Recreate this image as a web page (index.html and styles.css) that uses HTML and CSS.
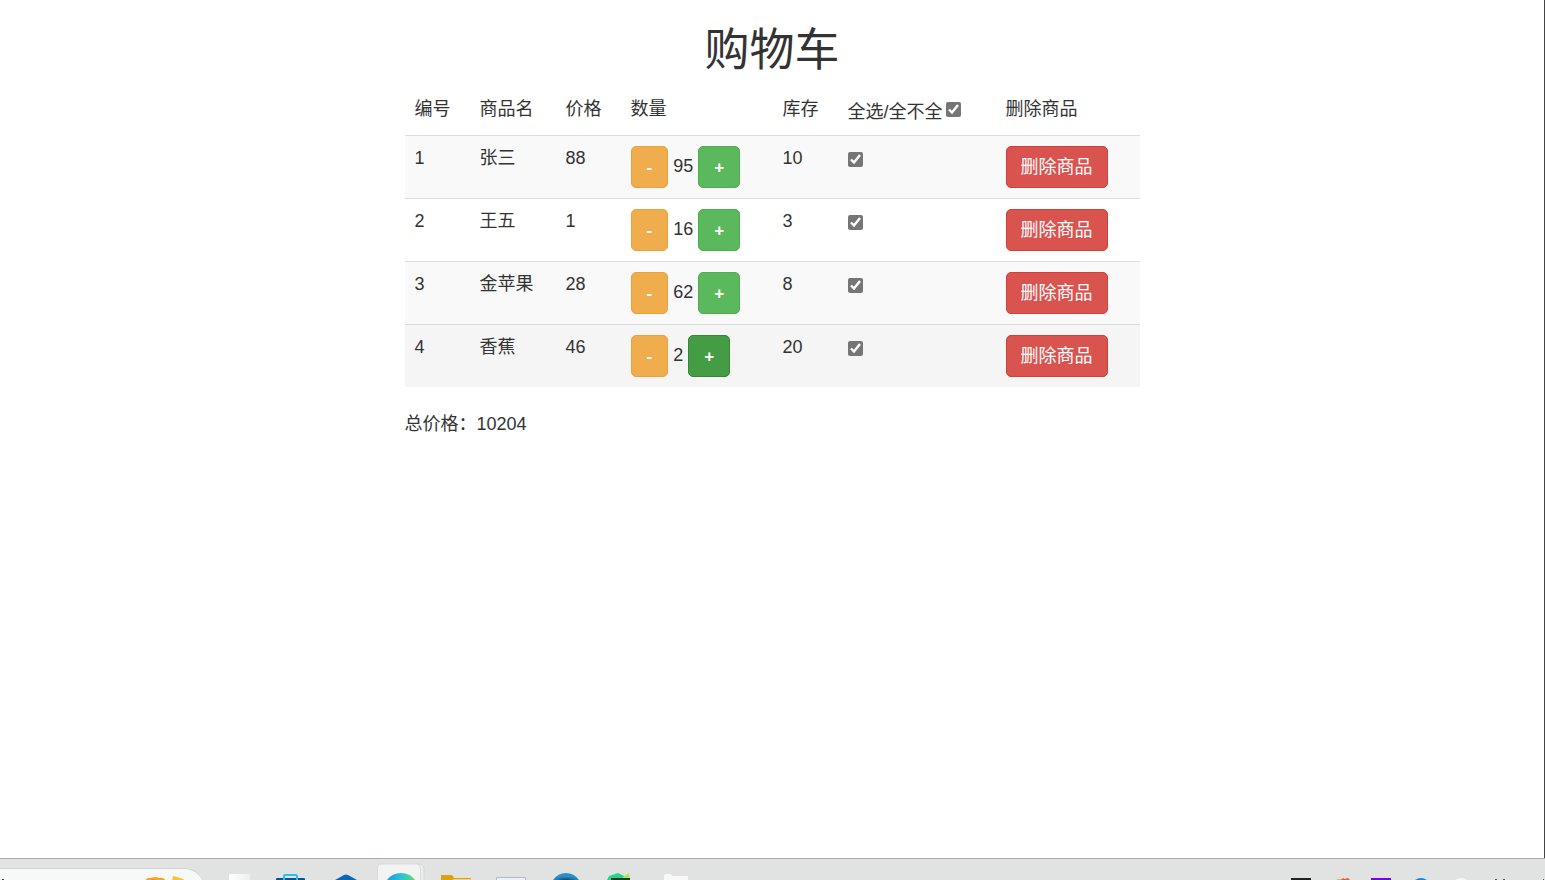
FILE: index.html
```html
<!DOCTYPE html>
<html lang="zh-CN">
<head>
<meta charset="utf-8">
<meta name="viewport" content="width=device-width, initial-scale=1">
<title>购物车</title>
<link rel="stylesheet" href="styles.css">
</head>
<body>
<main class="page">
  <div class="cart">
    <h1 class="cart-title">购物车</h1>
    <table class="cart-table">
      <colgroup>
        <col class="col-id"><col class="col-name"><col class="col-price"><col class="col-qty"><col class="col-stock"><col class="col-check"><col class="col-delete">
      </colgroup>
      <thead>
        <tr>
          <th scope="col">编号</th>
          <th scope="col">商品名</th>
          <th scope="col">价格</th>
          <th scope="col">数量</th>
          <th scope="col">库存</th>
          <th scope="col"><label class="check-all">全选/全不全 <input class="check" type="checkbox" checked></label></th>
          <th scope="col">删除商品</th>
        </tr>
      </thead>
      <tbody>
        <tr>
          <td>1</td><td>张三</td><td>88</td>
          <td><div class="qty"><button class="btn btn-warning" type="button">-</button><span>95</span><button class="btn btn-success" type="button">+</button></div></td>
          <td>10</td>
          <td><input class="check" type="checkbox" aria-label="张三" checked></td>
          <td><button class="btn btn-danger" type="button">删除商品</button></td>
        </tr>
        <tr>
          <td>2</td><td>王五</td><td>1</td>
          <td><div class="qty"><button class="btn btn-warning" type="button">-</button><span>16</span><button class="btn btn-success" type="button">+</button></div></td>
          <td>3</td>
          <td><input class="check" type="checkbox" aria-label="王五" checked></td>
          <td><button class="btn btn-danger" type="button">删除商品</button></td>
        </tr>
        <tr>
          <td>3</td><td>金苹果</td><td>28</td>
          <td><div class="qty"><button class="btn btn-warning" type="button">-</button><span>62</span><button class="btn btn-success" type="button">+</button></div></td>
          <td>8</td>
          <td><input class="check" type="checkbox" aria-label="金苹果" checked></td>
          <td><button class="btn btn-danger" type="button">删除商品</button></td>
        </tr>
        <tr class="is-hovered">
          <td>4</td><td>香蕉</td><td>46</td>
          <td><div class="qty"><button class="btn btn-warning" type="button">-</button><span>2</span><button class="btn btn-success is-active" type="button">+</button></div></td>
          <td>20</td>
          <td><input class="check" type="checkbox" aria-label="香蕉" checked></td>
          <td><button class="btn btn-danger" type="button">删除商品</button></td>
        </tr>
      </tbody>
    </table>
    <p class="total">总价格：10204</p>
  </div>
</main>
<footer class="taskbar">
  <div class="search">
    <svg width="204" height="12" viewBox="0 0 204 12" aria-hidden="true">
      <path d="M2 10h2v2H2z" fill="#444"/>
      <path d="M145 12q2-4 6-3 5-2 8 0 5-1 7 3z" fill="#f5a623"/>
      <path d="M150 12l3-2 3 2z" fill="#e98a10"/>
      <path d="M172 12l1-5 4 1 6 2 2 2z" fill="#fbc235"/>
    </svg>
  </div>
  <div class="apps">
    <button class="app" type="button" aria-label="任务视图"><svg width="55" height="21" viewBox="0 0 55 21"><defs><linearGradient id="pane"><stop stop-color="#fff"/><stop offset="1" stop-color="#eee"/></linearGradient></defs><path d="M17 16q0-1 1-1h19q1 0 1 1v5H17z" fill="url(#pane)"/></svg></button>
    <button class="app" type="button" aria-label="应用商店"><svg width="55" height="21" viewBox="0 0 55 21"><path d="M9 21v-1q0-1 1-1h27q1 0 1 1v1z" fill="#0a5494"/><path d="M17 21v-4q0-1 1-1h11q1 0 1 1v4" fill="none" stroke="#28c1ef" stroke-width="2"/></svg></button>
    <button class="app" type="button" aria-label="开发工具"><svg width="55" height="21" viewBox="0 0 55 21"><path d="M13 21l9-5q2-1 4 0l9 5z" fill="#0b66b8"/></svg></button>
    <button class="app" type="button" aria-label="浏览器"><svg width="55" height="21" viewBox="0 0 55 21"><defs><linearGradient id="wave"><stop stop-color="#2797df"/><stop offset=".55" stop-color="#2cc6cf"/><stop offset="1" stop-color="#62dc68"/></linearGradient></defs><path d="M38 5h4q5 0 5 5v12h-9z" fill="#eceded" stroke="#d5d6d6"/><path d="M.5 22V9q0-4 4-4h35q4 0 4 4v13z" fill="#f3f3f3" stroke="#dadbdb"/><path d="M10 21q5-7 14-7t14 7z" fill="url(#wave)"/></svg></button>
    <button class="app" type="button" aria-label="文件资源管理器"><svg width="55" height="21" viewBox="0 0 55 21"><path d="M20 19h19v2H20z" fill="#ffd45e"/><path d="M9 21v-5h10q2 0 3 3h17v1H22l-2 1z" fill="#dda013"/></svg></button>
    <button class="app" type="button" aria-label="窗口"><svg width="55" height="21" viewBox="0 0 55 21"><path d="M9.500 22v-3.500h29V22z" fill="#eef0f4" stroke="#b2bbc5"/></svg></button>
    <button class="app" type="button" aria-label="数据库"><svg width="55" height="21" viewBox="0 0 55 21"><defs><radialGradient id="orb" cx=".5" cy="1"><stop stop-color="#08476f"/><stop offset="1" stop-color="#2c8fc6"/></radialGradient></defs><path d="M11 21q5-7 13-7t13 7z" fill="url(#orb)"/></svg></button>
    <button class="app" type="button" aria-label="编辑器"><svg width="55" height="21" viewBox="0 0 55 21"><path d="M10 21l2-4 9-3 6 3v4z" fill="#21d789"/><path d="M26 18l6-4 1 7h-7z" fill="#a5ed4b"/><path d="M14 19h19v2H14z" fill="#26382c"/></svg></button>
    <button class="app" type="button" aria-label="文件夹"><svg width="55" height="21" viewBox="0 0 55 21"><path d="M12 21v-4q0-2 2-2h4l3 2h14q1 0 1 1v3z" fill="#f8f8f8"/></svg></button>
  </div>
  <div class="tray" aria-hidden="true">
    <svg width="40" height="21" viewBox="0 0 40 21"><path d="M10 19h20v2H10z" fill="#222"/></svg>
    <svg width="40" height="21" viewBox="0 0 40 21"><path d="M15 21l2-1h4v1z" fill="#f6b62d"/><path d="M20 21l2-2 2 1 3-1 2 2z" fill="#f05a28"/></svg>
    <svg width="40" height="21" viewBox="0 0 40 21"><path d="M10 19h20v2H10z" fill="#7a00f5"/></svg>
    <svg width="40" height="21" viewBox="0 0 40 21"><path d="M14 21q6-4 12 0z" fill="#0a84ff"/></svg>
    <svg width="40" height="21" viewBox="0 0 40 21"><path d="M14 21q6-4 12 0z" fill="#f7f7f7"/></svg>
    <svg width="40" height="21" viewBox="0 0 40 21"><path d="M14 20h2v1h-2zM22 20h2v1h-2z" fill="#555"/></svg>
    <svg width="24" height="21" viewBox="0 0 24 21"><path d="M22 20h1v1h-1z" fill="#555"/></svg>
  </div>
</footer>
</body>
</html>
```
FILE: styles.css
```css
* { box-sizing: border-box; }

body {
  margin: 0;
  min-height: 100vh;
  display: flex;
  flex-direction: column;
  background: #fff;
  color: #333;
  font: 18px/25px "Liberation Sans", Arial, "Noto Sans CJK SC", sans-serif;
}

.page {
  flex: 1;
  border-right: 1px solid #444;
}

.cart {
  width: 100%;
  max-width: 735px;
  margin: 0 auto;
}

.cart-title {
  margin: 26px 0 10px;
  font-size: 45px;
  font-weight: 400;
  line-height: 50px;
  text-align: center;
}

.cart-table {
  width: 100%;
  margin-bottom: 25px;
  table-layout: fixed;
  border-collapse: separate;
  border-spacing: 0;
}

.col-id, .col-price, .col-stock { width: 65px; }
.col-name { width: 86px; }
.col-qty { width: 152px; }
.col-check { width: 158px; }
.col-delete { width: 144px; }

.cart-table th,
.cart-table td {
  padding: 10px;
  text-align: left;
  vertical-align: top;
  font-weight: 400;
  white-space: nowrap;
}

.cart-table th {
  height: 49px;
  padding-top: 11px;
}

.cart-table td { border-top: 1px solid #ddd; }
.cart-table tbody tr:nth-child(odd) { background: #f9f9f9; }
.cart-table tbody tr:hover,
.cart-table tbody tr.is-hovered { background: #f5f5f5; }

.check {
  display: block;
  width: 15px;
  height: 15px;
  margin: 6px 0 0;
  accent-color: #767676;
}

.check-all {
  display: flex;
  gap: 3px;
  padding-top: 3px;
}

.check-all .check { margin-top: 2px; }

.qty {
  display: flex;
  align-items: center;
  gap: 5px;
}

.qty span { padding-bottom: 2px; }

.btn {
  display: block;
  height: 42px;
  padding: 0 15px;
  border: 1px solid;
  border-radius: 5px;
  color: #fff;
  font: inherit;
  line-height: 25px;
  cursor: pointer;
}

.qty .btn {
  font-size: 17px;
  font-weight: 700;
}

.btn-warning { background: #f0ad4e; border-color: #eea236; }
.btn-success { background: #5cb85c; border-color: #4cae4c; }
.btn-success.is-active { background: #449d44; border-color: #398439; }

.btn-danger {
  padding: 0 14px;
  background: #d9534f;
  border-color: #d43f3a;
}

.total { margin: 0; }

.taskbar {
  display: flex;
  height: 22px;
  overflow: hidden;
  border-top: 1px solid #acacac;
  background: #e1e2e2;
}

.search {
  flex: none;
  width: 204px;
  height: 42px;
  margin: 9px 8px 0 0;
  border-top: 1px solid #d0d1d1;
  border-radius: 0 20px 20px 0;
  background: #f7f8f8;
}

.search svg,
.app svg,
.tray svg { display: block; }

.apps { display: flex; }

.app {
  width: 55px;
  height: 21px;
  padding: 0;
  border: 0;
  background: none;
}

.tray {
  display: flex;
  margin-left: auto;
}
```
